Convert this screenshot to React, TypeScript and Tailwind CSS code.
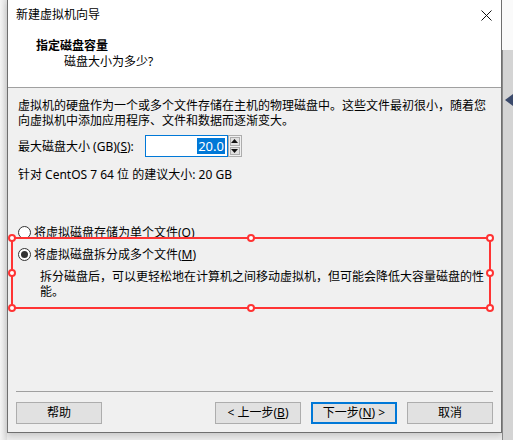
import React from 'react';

const font = { fontFamily: '"Noto Sans", "Noto Sans CJK SC", sans-serif' };

const Radio: React.FC<{ checked?: boolean }> = ({ checked }) => (
  <span className="w-[13px] h-[13px] rounded-full border border-[#333] bg-white flex items-center justify-center shrink-0">
    {checked && <span className="w-[7px] h-[7px] rounded-full bg-[#333]" />}
  </span>
);

const Btn: React.FC<{ children: React.ReactNode; primary?: boolean }> = ({ children, primary }) => (
  <div
    className={
      'w-[86px] h-[22px] flex items-center justify-center text-[12px] bg-[#e1e1e1] ' +
      (primary ? 'border-2 border-[#0078d7]' : 'border border-[#adadad]')
    }
  >
    {children}
  </div>
);

const Handle: React.FC<{ x: number; y: number }> = ({ x, y }) => (
  <span
    className="absolute w-[8px] h-[8px] rounded-full bg-white border-2 border-[#ff3333]"
    style={{ left: x - 4, top: y - 4 }}
  />
);

export default function App() {
  const handles = [
    [12, 238], [251, 238], [490, 238],
    [12, 273], [490, 273],
    [12, 308], [251, 308], [490, 308],
  ];

  return (
    <div className="relative w-[513px] h-[440px] flex bg-[#ececec] overflow-hidden text-black" style={font}>
      {/* shadow strip left */}
      <div className="w-[7px] h-full bg-gradient-to-r from-[#f4f4f4] to-[#dedede]" />

      {/* dialog */}
      <div className="w-[498px] h-[433px] flex flex-col border-x border-b border-[#6f6f6f] bg-[#f0f0f0] shadow-[0_3px_6px_rgba(0,0,0,0.15)]">
        <div className="h-[30px] bg-white flex items-center justify-between pl-[8px] pr-[9px] text-[12px]">
          <span>新建虚拟机向导</span>
          <svg width="11" height="11" viewBox="0 0 11 11">
            <path d="M0.5 0.5 L10.5 10.5 M10.5 0.5 L0.5 10.5" stroke="#111" strokeWidth="1" />
          </svg>
        </div>

        <div className="h-[58px] bg-white border-b border-[#a0a0a0] pl-[28px] pt-[8px] text-[12px] leading-[16px]">
          <div className="font-bold">指定磁盘容量</div>
          <div className="pl-[28px]">磁盘大小为多少?</div>
        </div>

        <div className="flex-1 flex flex-col pl-[10px] pr-[8px] pt-[10px] text-[12px] leading-[15px]">
          <div>虚拟机的硬盘作为一个或多个文件存储在主机的物理磁盘中。这些文件最初很小，随着您</div>
          <div>向虚拟机中添加应用程序、文件和数据而逐渐变大。</div>

          <div className="mt-[7px] flex items-center h-[22px]">
            <span className="w-[127px]">
              最大磁盘大小 (GB)(<span className="underline">S</span>):
            </span>
            <div className="w-[83px] h-[22px] bg-white border border-[#0078d7] flex items-center justify-end pr-[2px]">
              <span className="bg-[#0078d7] text-white text-[13px] leading-[16px] px-[1px]">20.0</span>
            </div>
            <div className="w-[14px] h-[22px] flex flex-col gap-[1px] p-[1px] bg-[#f0f0f0] border border-[#adadad]">
              <div className="flex-1 bg-[#e1e1e1] border border-[#adadad] flex items-center justify-center">
                <svg width="7" height="4" viewBox="0 0 7 4"><path d="M3.5 0 L7 4 L0 4 Z" fill="#111" /></svg>
              </div>
              <div className="flex-1 bg-[#e1e1e1] border border-[#adadad] flex items-center justify-center">
                <svg width="7" height="4" viewBox="0 0 7 4"><path d="M0 0 L7 0 L3.5 4 Z" fill="#111" /></svg>
              </div>
            </div>
          </div>

          <div className="mt-[10px]">针对 CentOS 7 64 位 的建议大小: 20 GB</div>

          <div className="mt-[41px] flex items-center gap-[3px] h-[18px]">
            <Radio />
            <span>
              将虚拟磁盘存储为单个文件(<span className="underline">O</span>)
            </span>
          </div>
          <div className="mt-[4px] flex items-center gap-[3px] h-[18px]">
            <Radio checked />
            <span>
              将虚拟磁盘拆分成多个文件(<span className="underline">M</span>)
            </span>
          </div>
          <div className="pl-[22px] mt-[6px]">
            拆分磁盘后，可以更轻松地在计算机之间移动虚拟机，但可能会降低大容量磁盘的性能。
          </div>

          <div className="flex-1" />
        </div>

        <div className="border-t border-[#a0a0a0] mx-[8px]" />
        <div className="h-[40px] flex items-start pt-[10px] pl-[8px] pr-[8px]">
          <Btn>帮助</Btn>
          <div className="flex-1" />
          <div className="flex gap-[10px]">
            <Btn>
              &lt; 上一步(<span className="underline">B</span>)
            </Btn>
            <Btn primary>
              下一步(<span className="underline">N</span>) &gt;
            </Btn>
            <Btn>取消</Btn>
          </div>
        </div>
      </div>

      {/* background window on right */}
      <div className="flex-1 h-full flex flex-col">
        <div className="h-[50px] bg-[#fafafa]" />
        <div className="flex-1 bg-[#d4d4d4] border-l border-[#888] pt-[44px] pl-[2px]">
          <svg width="8" height="12" viewBox="0 0 8 12"><path d="M8 0 L0 6 L8 12 Z" fill="#3b4a6b" /></svg>
        </div>
      </div>

      {/* red annotation box */}
      <div className="absolute w-[480px] h-[72px] border-2 border-[#ff3333] pointer-events-none" style={{ left: 11, top: 237 }} />
      {handles.map(([x, y], i) => (
        <Handle key={i} x={x} y={y} />
      ))}
    </div>
  );
}
